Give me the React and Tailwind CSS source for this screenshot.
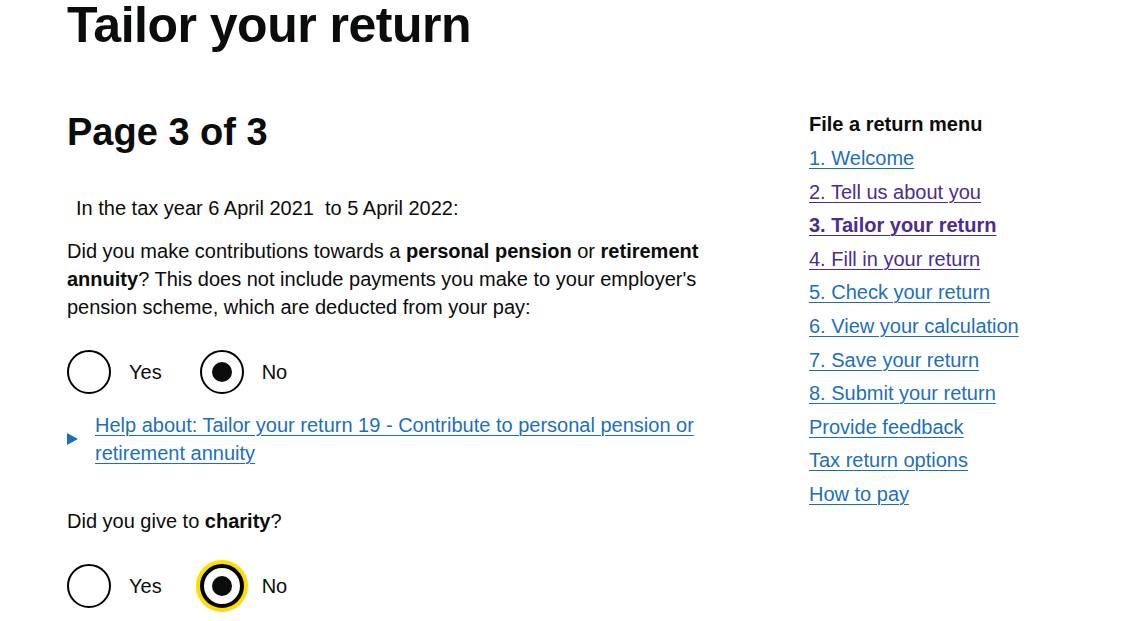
import React from 'react'

const menu = [
  { label: '1. Welcome', visited: false },
  { label: '2. Tell us about you', visited: true },
  { label: '3. Tailor your return', visited: true, current: true },
  { label: '4. Fill in your return', visited: true },
  { label: '5. Check your return' },
  { label: '6. View your calculation' },
  { label: '7. Save your return' },
  { label: '8. Submit your return' },
  { label: 'Provide feedback' },
  { label: 'Tax return options' },
  { label: 'How to pay' },
]

function Radio({ label, checked, focused }) {
  return (
    <label className="flex items-center">
      <span
        className={
          'flex h-[44px] w-[44px] shrink-0 items-center justify-center rounded-full border-black bg-white ' +
          (focused ? 'border-[4px] shadow-[0_0_0_4px_#ffdd00]' : 'border-2')
        }
      >
        {checked && <span className="block h-[20px] w-[20px] rounded-full bg-[#0b0c0c]" />}
      </span>
      <span className="ml-[18px]">{label}</span>
    </label>
  )
}

function RadioGroup({ focused }) {
  return (
    <div className="flex gap-[38px]">
      <Radio label="Yes" />
      <Radio label="No" checked focused={focused} />
    </div>
  )
}

export default function App() {
  return (
    <div className="min-h-[621px] bg-white font-['Liberation_Sans',Arial,sans-serif] text-[20px] leading-[28px] text-[#0b0c0c]">
      <div className="flex pl-[67px]">
        <main className="w-[660px] shrink-0">
          <h1 className="m-0 text-[50px] font-bold leading-[50px] tracking-[-0.5px]">Tailor your return</h1>

          <h2 className="mt-[57px] text-[38px] font-bold leading-[50px]">Page 3 of 3</h2>

          <p className="mt-[37px] pl-[9px]">In the tax year 6 April 2021&nbsp; to 5 April 2022:</p>

          <p className="mt-[15px]">
            Did you make contributions towards a <b>personal pension</b> or <b>retirement annuity</b>? This does not
            include payments you make to your employer's pension scheme, which are deducted from your pay:
          </p>

          <div className="mt-[29px]">
            <RadioGroup />
          </div>

          <div className="mt-[17px] flex items-center">
            <span className="mr-[17px] h-0 w-0 shrink-0 border-y-[6px] border-l-[11px] border-y-transparent border-l-[#1d70b8]" />
            <a href="#" className="text-[#1d70b8] underline decoration-1 underline-offset-[3px]">
              Help about: Tailor your return 19 - Contribute to personal pension or retirement annuity
            </a>
          </div>

          <p className="mt-[40px]">
            Did you give to <b>charity</b>?
          </p>

          <div className="mt-[29px]">
            <RadioGroup focused />
          </div>
        </main>

        <aside className="ml-[82px] pt-[110px]">
          <h3 className="text-[20px] font-bold leading-[28px]">File a return menu</h3>
          <ul className="mt-[6px] flex flex-col gap-[5.6px]">
            {menu.map((item) => (
              <li key={item.label}>
                <a
                  href="#"
                  className={
                    'underline decoration-1 underline-offset-[3px] ' +
                    (item.visited ? 'text-[#4c2c92] ' : 'text-[#1d70b8] ') +
                    (item.current ? 'font-bold' : '')
                  }
                >
                  {item.label}
                </a>
              </li>
            ))}
          </ul>
        </aside>
      </div>
    </div>
  )
}
